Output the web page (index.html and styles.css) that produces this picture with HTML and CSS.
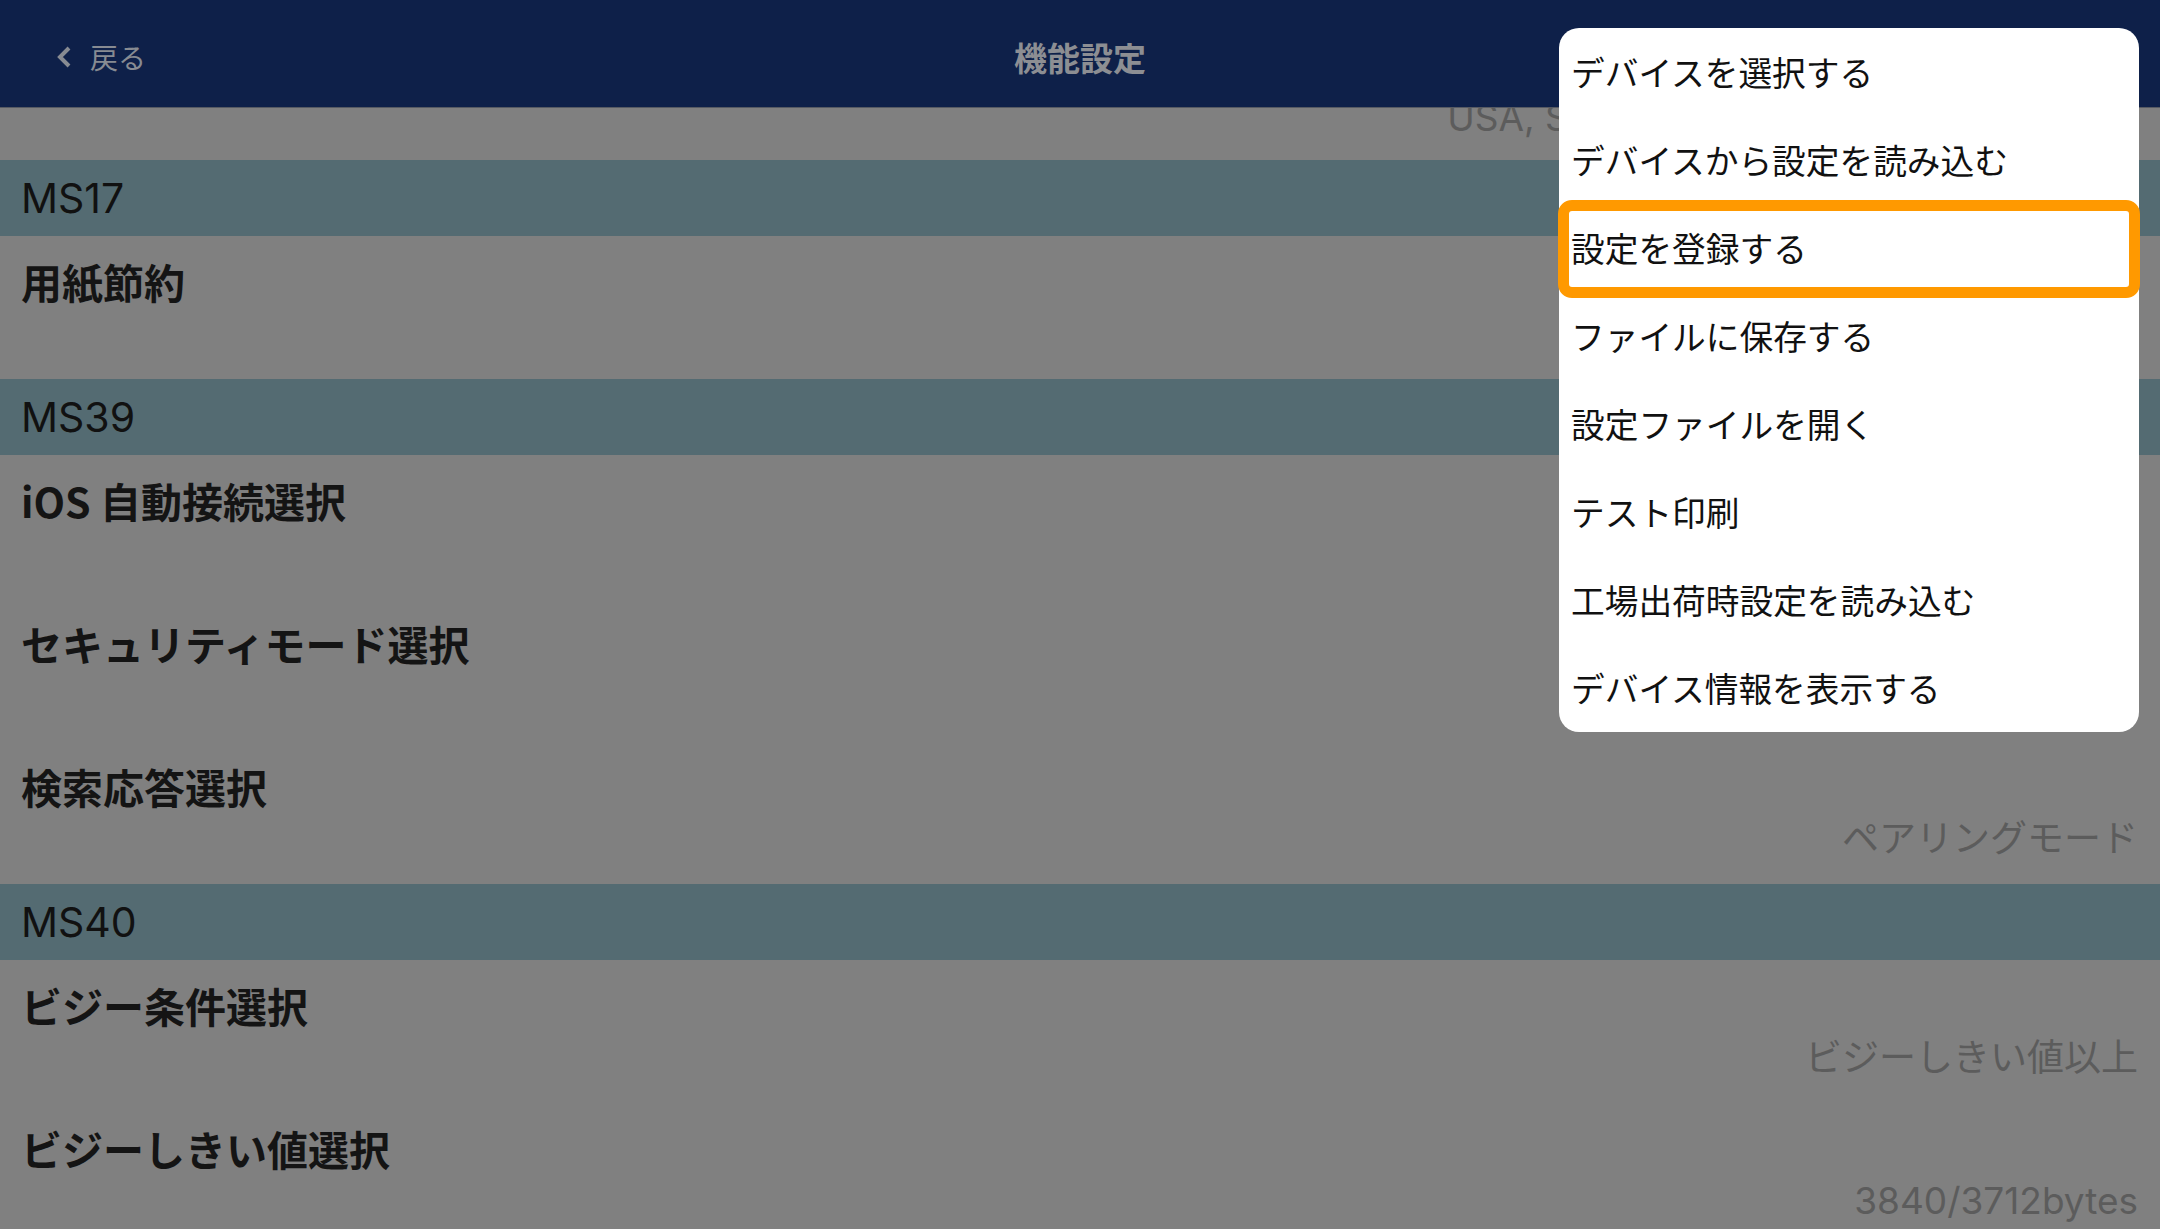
FILE: index.html
```html
<!DOCTYPE html>
<html lang="ja">
<head>
<meta charset="utf-8">
<title>機能設定</title>
<link rel="stylesheet" href="styles.css">
</head>
<body>
<div class="screen">
  <header class="navbar">
    <div class="nav-left">
      <svg class="chevron" width="20" height="24" viewBox="0 0 20 24" aria-hidden="true">
        <path d="M14 3 L5 12 L14 21" fill="none" stroke="currentColor" stroke-width="4" stroke-linecap="butt" stroke-linejoin="miter"/>
      </svg>
      <span class="back-label">戻る</span>
    </div>
    <div class="nav-title">機能設定</div>
    <div class="nav-right"></div>
  </header>

  <main class="list">
    <div class="row-tail"><span class="value">USA, Singapore, Malaysia, Thailand, Fiji</span></div>

    <div class="section">MS17</div>
    <div class="row">
      <div class="title">用紙節約</div>
      <div class="value">無効</div>
    </div>

    <div class="section">MS39</div>
    <div class="row">
      <div class="title">iOS 自動接続選択</div>
      <div class="value">無効</div>
    </div>
    <div class="row">
      <div class="title">セキュリティモード選択</div>
      <div class="value">無効</div>
    </div>
    <div class="row">
      <div class="title">検索応答選択</div>
      <div class="value">ペアリングモード</div>
    </div>

    <div class="section">MS40</div>
    <div class="row">
      <div class="title">ビジー条件選択</div>
      <div class="value">ビジーしきい値以上</div>
    </div>
    <div class="row">
      <div class="title">ビジーしきい値選択</div>
      <div class="value">3840/3712bytes</div>
    </div>
  </main>

  <nav class="menu">
    <div class="menu-item">デバイスを選択する</div>
    <div class="menu-item">デバイスから設定を読み込む</div>
    <div class="menu-item">設定を登録する</div>
    <div class="menu-item">ファイルに保存する</div>
    <div class="menu-item">設定ファイルを開く</div>
    <div class="menu-item">テスト印刷</div>
    <div class="menu-item">工場出荷時設定を読み込む</div>
    <div class="menu-item">デバイス情報を表示する</div>
    <div class="highlight"></div>
  </nav>
</div>
</body>
</html>
```

FILE: styles.css
```css
* { box-sizing: border-box; }

html, body {
  margin: 0;
  padding: 0;
}

body {
  width: 2160px;
  height: 1229px;
  overflow: hidden;
  background: #808080;
  font-family: "Inter", "Noto Sans CJK JP", sans-serif;
  color: #111111;
}

.screen {
  position: relative;
  width: 2160px;
  height: 1229px;
  overflow: hidden;
  display: flex;
  flex-direction: column;
}

/* Navigation bar */
.navbar {
  flex: none;
  height: 108px;
  background: #0e2049;
  border-bottom: 1px solid #565a63;
  display: grid;
  grid-template-columns: 1fr auto 1fr;
  align-items: center;
  position: relative;
  z-index: 2;
}

.nav-left {
  display: flex;
  align-items: center;
  padding-left: 55px;
  gap: 15px;
  color: #878b92;
  padding-top: 6px;
}

.chevron {
  display: block;
  color: #878b92;
}

.back-label {
  font-family: "Noto Sans CJK JP", sans-serif;
  font-size: 28px;
  line-height: 32px;
  color: #878b92;
}

.nav-title {
  font-family: "Noto Sans CJK JP", sans-serif;
  font-weight: 700;
  font-size: 33px;
  line-height: 40px;
  color: #8c8e93;
  padding-top: 6px;
}

/* List */
.list {
  flex: 1;
  display: flex;
  flex-direction: column;
  overflow: hidden;
}

.row-tail {
  flex: none;
  height: 52px;
  overflow: hidden;
  display: flex;
  justify-content: flex-end;
  padding-right: 22px;
}

.row-tail .value {
  margin-top: -9px;
  white-space: nowrap;
}

.section {
  flex: none;
  height: 76px;
  background: #546b72;
  display: flex;
  align-items: center;
  padding-left: 21px;
  font-family: "Inter", "Noto Sans CJK JP", sans-serif;
  font-size: 41px;
  line-height: 48px;
  color: #111111;
}

.row {
  flex: none;
  height: 143px;
  display: flex;
  flex-direction: column;
  padding: 25px 22px 0 21px;
}

.title {
  font-family: "Noto Sans CJK JP", sans-serif;
  font-weight: 700;
  font-size: 41px;
  line-height: 41px;
  color: #141414;
}

.value {
  font-family: "Inter", "Noto Sans CJK JP", sans-serif;
  font-size: 37px;
  line-height: 37px;
  color: #5c5c5c;
  text-align: right;
}

.row .value {
  margin-top: 13px;
}

/* Popover menu */
.menu {
  position: absolute;
  top: 28px;
  left: 1559px;
  width: 580px;
  background: #ffffff;
  border-radius: 20px;
  z-index: 5;
  display: flex;
  flex-direction: column;
}

.menu-item {
  height: 88px;
  display: flex;
  align-items: center;
  padding-left: 12px;
  font-family: "Noto Sans CJK JP", sans-serif;
  font-size: 33.7px;
  line-height: 40px;
  color: #111111;
}

.highlight {
  position: absolute;
  top: 172px;
  left: -1px;
  width: 582px;
  height: 98px;
  border: 11px solid #ff9900;
  border-radius: 14px;
  pointer-events: none;
}
```
